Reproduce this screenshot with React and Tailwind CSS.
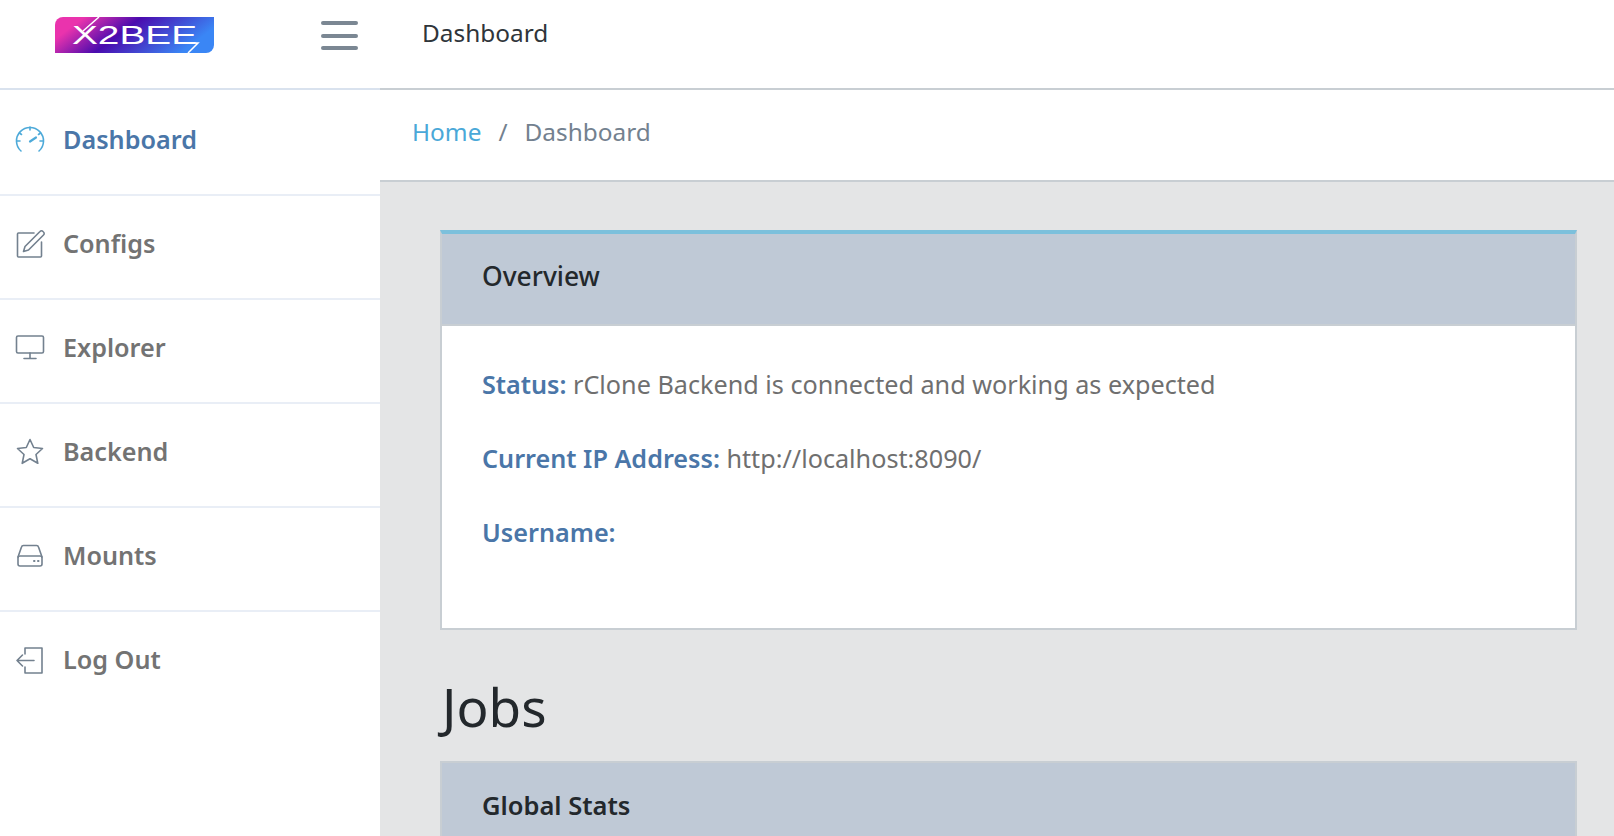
import React from 'react';

const font = { fontFamily: '"Noto Sans", "Noto Sans CJK KR", sans-serif' };

function Icon({ children, className }) {
    return (
        <svg
            viewBox="0 0 30 30"
            fill="none"
            stroke="currentColor"
            strokeWidth="1.6"
            strokeLinecap="round"
            strokeLinejoin="round"
            className={`w-[30px] h-[30px] shrink-0 ${className}`}
        >
            {children}
        </svg>
    );
}

const navItems = [
    {
        label: 'Dashboard',
        active: true,
        icon: (
            <>
                <path d="M6 26a13.500 13.500 0 1 1 18 0" />
                <path d="M15 16.500l6-4" strokeWidth="2.2" />
                <path d="M15 2v3M4.500 8l2 1.500M25.500 8l-2 1.500M2 16h3M25 16h3" />
            </>
        ),
    },
    {
        label: 'Configs',
        icon: (
            <>
                <path d="M19 4H3.500a1 1 0 0 0-1 1v22a1 1 0 0 0 1 1h22a1 1 0 0 0 1-1V13" />
                <path d="M10 17.500L25 2.500a2 2 0 0 1 3 0l.5.5a2 2 0 0 1 0 3L13.500 21l-5 1.500z" />
            </>
        ),
    },
    {
        label: 'Explorer',
        icon: (
            <>
                <rect x="1.500" y="3" width="27" height="17" rx="1.500" />
                <path d="M15 20v5M9 25.500h12" />
            </>
        ),
    },
    {
        label: 'Backend',
        icon: (
            <path d="M15 2.500l3.700 8 8.800 1-6.500 6 1.800 8.800L15 21.800l-7.800 4.500L9 17.500l-6.500-6 8.800-1z" />
        ),
    },
    {
        label: 'Mounts',
        icon: (
            <>
                <path d="M3 16l3.500-10a2 2 0 0 1 2-1.500h13a2 2 0 0 1 2 1.500L27 16" />
                <rect x="3" y="15" width="24" height="10" rx="2" />
                <path d="M19 20h.5M23 20h.5" strokeWidth="2" />
            </>
        ),
    },
    {
        label: 'Log Out',
        icon: (
            <>
                <path d="M10 9V3h17v25H10v-6" />
                <path d="M19 15.500H2M7.500 10l-5.500 5.500L7.500 21" />
            </>
        ),
    },
];

function Logo() {
    return (
        <svg viewBox="0 0 159 36" className="w-[159px] h-[36px]">
            <defs>
                <linearGradient id="logoFill" x1="0" y1="0" x2="1" y2="0.3">
                    <stop offset="0.17" stopColor="#ea33ad" />
                    <stop offset="0.5" stopColor="#4a0bae" />
                    <stop offset="1" stopColor="#3a86f5" />
                </linearGradient>
            </defs>
            <path d="M8 0h151v28a8 8 0 0 1-8 8H0V8a8 8 0 0 1 8-8z" fill="url(#logoFill)" />
            <text
                x="17"
                y="26.500"
                fill="#fff"
                fontSize="26"
                textLength="125"
                lengthAdjust="spacingAndGlyphs"
                style={{ fontFamily: '"Liberation Sans", sans-serif' }}
            >
                X2BEE
            </text>
            <path d="M28 14L44 0M126 26h17l-10 10" stroke="#fff" strokeWidth="1.500" fill="none" />
        </svg>
    );
}

function Header() {
    return (
        <header className="h-[90px] shrink-0 bg-white border-b-2 border-[#c8ced3] flex items-start">
            <div className="w-[380px] shrink-0 flex items-start">
                <div className="ml-[55px] mt-[17px]">
                    <Logo />
                </div>
                <div className="ml-[107px] mt-[21px] w-[37px] h-[29px] flex flex-col justify-between">
                    <div className="h-[4px] rounded-sm bg-[#7b8793]" />
                    <div className="h-[4px] rounded-sm bg-[#7b8793]" />
                    <div className="h-[4px] rounded-sm bg-[#7b8793]" />
                </div>
            </div>
            <div className="ml-[42px] mt-[15px] text-[24.400px] leading-[36px] text-[#2f353a]">Dashboard</div>
        </header>
    );
}

function Sidebar() {
    return (
        <aside className="w-[380px] shrink-0 bg-white border-t-2 border-[#d9e2ee] -mt-[2px] relative">
            <nav className="pt-[2px]">
                {navItems.map((item) => (
                    <div
                        key={item.label}
                        className="h-[104px] pb-[6px] border-b-2 last:border-b-transparent border-[#e9eef6] flex items-center pl-[15px] gap-[18px]"
                    >
                        <Icon className={item.active ? 'text-[#4eaad9]' : 'text-[#73818f]'}>{item.icon}</Icon>
                        <span
                            className={`text-[25.200px] font-semibold ${item.active ? 'text-[#4a76a8]' : 'text-[#737373]'}`}
                        >
                            {item.label}
                        </span>
                    </div>
                ))}
            </nav>
        </aside>
    );
}

function Card({ title, accent, titleClass, children }) {
    return (
        <div className={`bg-white border-2 border-[#c8ced3] ${accent ? 'border-t-4 border-t-[#7cc0dc]' : ''}`}>
            <div className="h-[92px] pb-[5px] bg-[#bfc9d6] border-b-2 border-[#c8ced3] px-[40px] flex items-center">
                <span className={`text-[#23282c] ${titleClass}`}>{title}</span>
            </div>
            {children}
        </div>
    );
}

function InfoRow({ label, value }) {
    return (
        <p className="h-[74px] text-[25.200px] leading-[36px] text-[#6f6f6f]">
            <span className="font-semibold text-[#4a76a8]">{label}</span> {value}
        </p>
    );
}

export default function App() {
    return (
        <div className="h-[836px] overflow-hidden flex flex-col bg-white" style={font}>
            <Header />
            <div className="flex flex-1 min-h-0">
                <Sidebar />
                <main className="flex-1 min-w-0 bg-[#e4e5e6] flex flex-col">
                    <div className="h-[92px] shrink-0 bg-white border-b-2 border-[#c8ced3] pl-[32px] flex items-center pb-[6px] text-[24.400px]">
                        <span className="text-[#4aa8d8]">Home</span>
                        <span className="mx-[17px] text-[#73818f]">/</span>
                        <span className="text-[#73818f]">Dashboard</span>
                    </div>
                    <div className="pl-[60px] pr-[37px] pt-[48px]">
                        <Card title="Overview" accent titleClass="text-[26.400px] font-medium">
                            <div className="px-[40px] pt-[40px] h-[302px]">
                                <InfoRow label="Status:" value="rClone Backend is connected and working as expected" />
                                <InfoRow label="Current IP Address:" value="http://localhost:8090/" />
                                <InfoRow label="Username:" value="" />
                            </div>
                        </Card>
                        <h2 className="mt-[37px] mb-[15px] ml-[2px] text-[53px] leading-[79px] text-[#23282c]">Jobs</h2>
                        <Card title="Global Stats" titleClass="text-[25.500px] font-semibold" />
                    </div>
                </main>
            </div>
        </div>
    );
}
